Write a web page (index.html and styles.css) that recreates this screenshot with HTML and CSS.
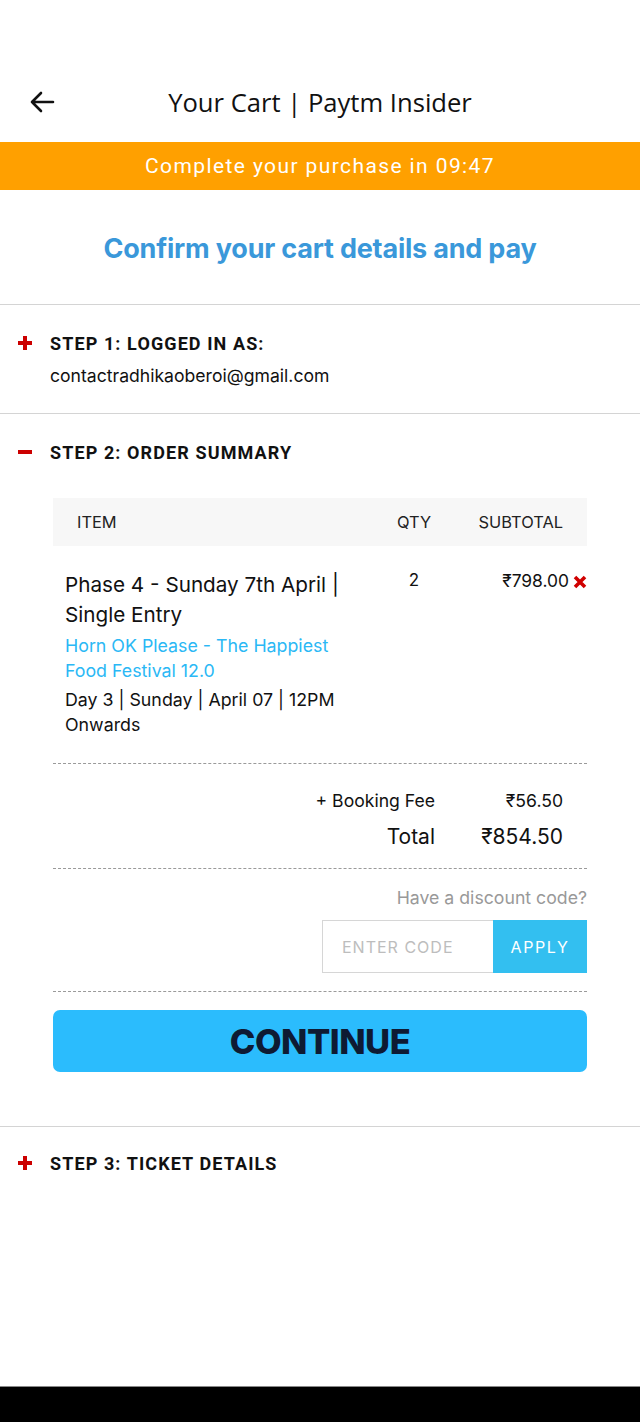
FILE: index.html
```html
<!DOCTYPE html>
<html lang="en">
<head>
<meta charset="utf-8">
<title>Your Cart | Paytm Insider</title>
<link rel="stylesheet" href="styles.css">
</head>
<body>
<div class="screen">
  <main class="main">
    <header class="topbar">
      <span class="back">
        <svg width="26" height="22" viewBox="0 0 26 22"><path d="M24 11H3M12 2L3 11l9 9" fill="none" stroke="#111" stroke-width="2.6" stroke-linecap="round" stroke-linejoin="round"/></svg>
      </span>
      <h1 class="title">Your Cart | Paytm Insider</h1>
      <span></span>
    </header>
    <div class="timer">Complete your purchase in 09:47</div>
    <h2 class="confirm">Confirm your cart details and pay</h2>

    <section class="step">
      <div class="step-head"><span class="icon plus"></span><span class="step-title">STEP 1: LOGGED IN AS:</span></div>
      <div class="email">contactradhikaoberoi@gmail.com</div>
    </section>

    <section class="step step-open">
      <div class="step-head"><span class="icon minus"></span><span class="step-title">STEP 2: ORDER SUMMARY</span></div>
      <div class="summary">
        <div class="thead">
          <span class="c-item">ITEM</span>
          <span class="c-qty">QTY</span>
          <span class="c-sub">SUBTOTAL</span>
        </div>
        <div class="row">
          <div class="c-item item-info">
            <div class="item-name">Phase 4 - Sunday 7th April | Single Entry</div>
            <div class="item-event">Horn OK Please - The Happiest Food Festival 12.0</div>
            <div class="item-date">Day 3 | Sunday | April 07 | 12PM Onwards</div>
          </div>
          <div class="c-qty qty">2</div>
          <div class="c-sub price">₹798.00<svg class="remove" width="14" height="14" viewBox="0 0 14 14"><path d="M2 2l10 10M12 2L2 12" stroke="#d00000" stroke-width="3.6" stroke-linecap="butt"/></svg></div>
        </div>
        <div class="totals">
          <div class="trow fee"><span class="tl">+ Booking Fee</span><span class="tv">₹56.50</span></div>
          <div class="trow total"><span class="tl">Total</span><span class="tv">₹854.50</span></div>
        </div>
        <div class="discount">
          <div class="disc-q">Have a discount code?</div>
          <div class="disc-form">
            <span class="code-input">ENTER CODE</span>
            <span class="apply">APPLY</span>
          </div>
        </div>
        <div class="continue-wrap">
          <button class="continue">CONTINUE</button>
        </div>
      </div>
    </section>

    <section class="step step-last">
      <div class="step-head"><span class="icon plus"></span><span class="step-title">STEP 3: TICKET DETAILS</span></div>
    </section>
  </main>
  <div class="navbar"></div>
</div>
</body>
</html>
```

FILE: styles.css
```css
* { box-sizing: border-box; }
html, body { margin: 0; padding: 0; background: #fff; }
body { font-family: Inter, "Noto Sans", sans-serif; color: #111; }

.screen { width: 640px; height: 1422px; display: flex; flex-direction: column; }
.main { flex: 1; }

.topbar {
  height: 142px;
  display: grid;
  grid-template-columns: 80px 1fr 80px;
  align-items: center;
  padding-top: 62px;
}
.back { display: flex; align-items: center; padding-left: 29px; }
.title {
  margin: 0;
  text-align: center;
  font-family: "Open Sans", sans-serif;
  font-weight: 400;
  font-size: 25.6px;
  color: #111;
}

.timer {
  height: 48px;
  background: #ffa000;
  color: #fff;
  display: flex; align-items: center; justify-content: center;
  font-family: Roboto, sans-serif;
  font-weight: 400;
  font-size: 21px;
  letter-spacing: 1.4px;
}

.confirm {
  margin: 0;
  height: 115px;
  border-bottom: 1px solid #d4d4d4;
  display: flex; align-items: center; justify-content: center;
  padding-top: 2px;
  color: #3a98da;
  font-weight: 700;
  font-size: 27px;
  letter-spacing: -0.2px;
}

.step { border-bottom: 1px solid #d4d4d4; padding: 28px 0 27px; }
.step-last { border-bottom: none; padding-top: 26px; }
.step-head { display: flex; align-items: center; height: 20px; }
.icon { position: relative; width: 14px; height: 14px; margin: 0 18px 0 18px; }
.icon::before, .icon::after { content: ""; position: absolute; background: #cc0000; }
.plus::before { left: 5px; top: 0; width: 4px; height: 14px; }
.plus::after { left: 0; top: 5px; width: 14px; height: 4px; }
.minus::before { left: 0; top: 5px; width: 14px; height: 4px; }
.step-title {
  font-family: Roboto, sans-serif;
  font-weight: 700;
  font-size: 18px;
  letter-spacing: 1.1px;
  color: #111;
}
.email { margin: 12px 0 0 50px; font-size: 17.6px; line-height: 21px; color: #111; }

.step-open { padding-bottom: 54px; }
.summary { margin: 36px 53px 0; }
.thead {
  background: #f7f7f7;
  height: 48px;
  display: flex; align-items: center;
  font-size: 16.4px; color: #222;
}
.c-item { flex: 1; padding-left: 24px; }
.c-qty { width: 70px; text-align: center; margin-right: 18px; }
.c-sub { width: 120px; text-align: right; padding-right: 24px; }

.row { display: flex; align-items: flex-start; padding: 24px 0 26px; border-bottom: 1px dashed #9a9a9a; }
.row .c-item { padding-left: 12px; padding-right: 24px; }
.item-name { font-size: 20.7px; line-height: 30px; color: #111; }
.item-event { font-size: 17.8px; line-height: 25px; color: #2ab8f5; margin-top: 3px; }
.item-date { font-size: 17.8px; line-height: 25px; color: #111; margin-top: 4px; }
.qty { font-size: 17px; padding-top: 0; padding-left: 0; }
.price { font-size: 17.4px; padding-right: 0; padding-top: 0; display: flex; justify-content: flex-end; align-items: center; gap: 4px; white-space: nowrap; }
.remove { margin-top: 2px; }

.totals { padding: 23px 0 15px; border-bottom: 1px dashed #9a9a9a; }
.trow { display: flex; justify-content: flex-end; align-items: center; }
.tl { text-align: right; }
.tv { width: 152px; text-align: right; padding-right: 24px; }
.fee { font-size: 17.6px; height: 26px; }
.total { font-size: 21px; height: 34px; margin-top: 6px; }

.discount { padding: 18px 0 18px; border-bottom: 1px dashed #9a9a9a; display: flex; flex-direction: column; align-items: flex-end; }
.disc-q { font-size: 17.7px; color: #999; height: 26px; }
.disc-form { display: flex; margin-top: 7px; height: 53px; }
.code-input {
  width: 171px;
  border: 1px solid #d6d6d6;
  border-right: none;
  display: flex; align-items: center;
  padding-left: 19px;
  font-size: 16px; letter-spacing: 1px; color: #bdbdbd;
}
.apply {
  width: 94px;
  background: #33bff0;
  color: #fff;
  display: flex; align-items: center; justify-content: center;
  font-size: 16px; letter-spacing: 1.6px;
}

.continue-wrap { padding-top: 18px; }
.continue {
  width: 100%;
  height: 62px;
  border: none;
  border-radius: 7px;
  background: #2bbcfd;
  color: #0e1a33;
  font-family: Inter, sans-serif;
  font-weight: 800;
  font-size: 34.5px;
  letter-spacing: -0.5px;
  padding: 0;
}

.navbar { height: 36px; background: #000; border-top: 1px solid #888; }
```
